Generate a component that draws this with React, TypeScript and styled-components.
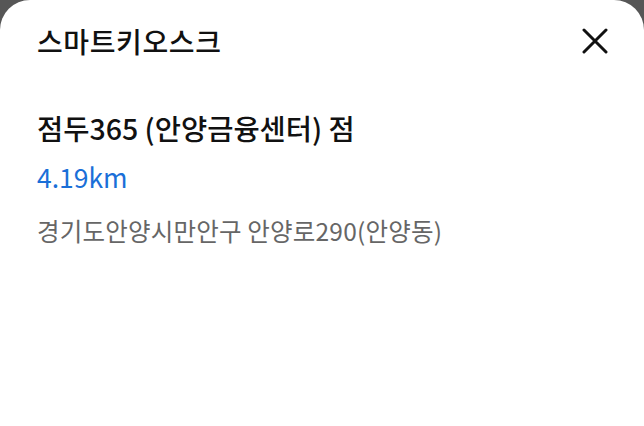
import styled, { createGlobalStyle } from "styled-components";

const GlobalStyle = createGlobalStyle`
  html, body {
    margin: 0;
    padding: 0;
    height: 100%;
    background: #565656;
  }
  #root {
    height: 100%;
  }
  * {
    box-sizing: border-box;
  }
`;

const Sheet = styled.div`
  height: 426px;
  background: #ffffff;
  border-radius: 30px 30px 0 0;
  font-family: "Noto Sans CJK KR", "Noto Sans", sans-serif;
  color: #111;
  overflow: hidden;
`;

const Header = styled.header`
  height: 82px;
  display: flex;
  align-items: center;
  justify-content: space-between;
  padding: 0 36px 0 37px;
`;

const Title = styled.h1`
  margin: 0;
  font-size: 28px;
  font-weight: 500;
  letter-spacing: 0.6px;
  line-height: 1;
  color: #111;
`;

const CloseButton = styled.button`
  border: 0;
  background: none;
  padding: 0;
  width: 26px;
  height: 26px;
  display: flex;
  align-items: center;
  justify-content: center;
  cursor: pointer;
`;

const Body = styled.section`
  display: flex;
  flex-direction: column;
  padding: 26px 37px 0;
`;

const StoreName = styled.h2`
  margin: 0;
  font-size: 28.5px;
  font-weight: 500;
  line-height: 40px;
  color: #111;
`;

const Distance = styled.div`
  margin-top: 12px;
  font-size: 26.5px;
  font-weight: 400;
  line-height: 34px;
  color: #1a6fd8;
`;

const Address = styled.div`
  margin-top: 20px;
  font-size: 24.5px;
  font-weight: 400;
  letter-spacing: 0.2px;
  line-height: 34px;
  color: #666;
`;

function App() {
  return (
    <>
      <GlobalStyle />
      <Sheet>
        <Header>
          <Title>스마트키오스크</Title>
          <CloseButton aria-label="닫기">
            <svg width="26" height="26" viewBox="0 0 26 26">
              <path
                d="M2 2 L24 24 M24 2 L2 24"
                stroke="#111"
                strokeWidth="3"
                strokeLinecap="round"
              />
            </svg>
          </CloseButton>
        </Header>
        <Body>
          <StoreName>점두365 (안양금융센터) 점</StoreName>
          <Distance>4.19km</Distance>
          <Address>경기도안양시만안구 안양로290(안양동)</Address>
        </Body>
      </Sheet>
    </>
  );
}

export default App;
